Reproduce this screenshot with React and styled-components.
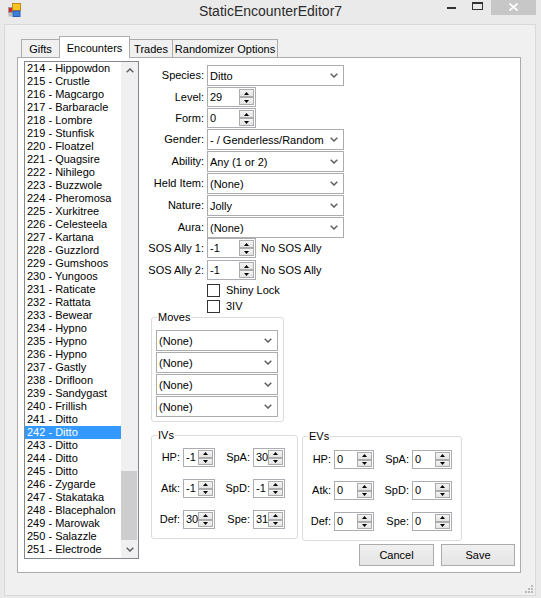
import React from "react";
import styled, { createGlobalStyle } from "styled-components";

const GlobalStyle = createGlobalStyle`
  html, body {
    margin: 0;
    padding: 0;
    background: #eaeaea;
  }
  body {
    font-family: "Liberation Sans", Arial, sans-serif;
    font-size: 11px;
    color: #000;
  }
  * {
    box-sizing: border-box;
  }
`;

const Window = styled.div`
  width: 541px;
  height: 598px;
  background: #eaeaea;
  display: flex;
  flex-direction: column;
`;

const TitleBar = styled.div`
  height: 24px;
  flex-shrink: 0;
  display: grid;
  grid-template-columns: 1fr auto 1fr;
  align-items: start;
`;

const AppIcon = styled.div`
  padding: 3px 0 0 8px;
  display: flex;
`;

const Title = styled.div`
  font-size: 14px;
  line-height: 22px;
  color: #2b2b2b;
`;

const Controls = styled.div`
  display: flex;
  justify-content: flex-end;
  margin-right: 5px;
`;

const CtlBtn = styled.div`
  width: ${(p) => p.$w}px;
  height: 15px;
  display: flex;
  justify-content: center;
  align-items: flex-start;
  padding-top: ${(p) => p.$pt}px;
  background: ${(p) => p.$bg || "transparent"};
`;

const Client = styled.div`
  margin: 0 5px 2px 4px;
  flex: 1;
  background: #f0f0f0;
  border: 1px solid #d9d9d9;
  padding: 11px 0 0 12px;
  display: flex;
  flex-direction: column;
`;

const TabStrip = styled.div`
  height: 21px;
  display: flex;
  align-items: flex-end;
  padding-left: 5px;
`;

const Tab = styled.div`
  width: ${(p) => p.$w}px;
  height: ${(p) => (p.$active ? 22 : 18)}px;
  margin-left: -1px;
  margin-bottom: ${(p) => (p.$active ? -1 : 0)}px;
  border: 1px solid #acacac;
  border-bottom: none;
  background: ${(p) => (p.$active ? "#fff" : "#f0f0f0")};
  position: relative;
  z-index: ${(p) => (p.$active ? 1 : 0)};
  display: flex;
  align-items: center;
  justify-content: center;
  white-space: nowrap;
`;

const TabPage = styled.div`
  width: 504px;
  height: 516px;
  border: 1px solid #acacac;
  background: #fff;
  display: flex;
  align-items: flex-start;
`;

const Footer = styled.div`
  flex: 1;
  display: flex;
  justify-content: flex-end;
  align-items: flex-end;
  padding: 0 1px 1px 0;
`;

const ListBox = styled.div`
  margin: 3px 0 0 6px;
  width: 115px;
  height: 498px;
  border: 1px solid #828790;
  display: flex;
`;

const Items = styled.div`
  flex: 1;
  overflow: hidden;
`;

const Item = styled.div`
  height: 13px;
  line-height: 13px;
  padding-left: 2px;
  white-space: nowrap;
  background: ${(p) => (p.$sel ? "#3399ff" : "transparent")};
  color: ${(p) => (p.$sel ? "#fff" : "#000")};
`;

const ScrollBar = styled.div`
  width: 17px;
  background: #f0f0f0;
  display: flex;
  flex-direction: column;
`;

const ScrollArrow = styled.div`
  height: 17px;
  display: flex;
  align-items: center;
  justify-content: center;
`;

const Track = styled.div`
  flex: 1;
  display: flex;
  flex-direction: column;
`;

const Thumb = styled.div`
  margin: 392px 1px 0 0;
  height: 69px;
  background: #cdcdcd;
`;

const Panel = styled.div`
  flex: 1;
  padding: 7px 5px 0 3px;
  display: flex;
  flex-direction: column;
`;

const FieldRow = styled.div`
  height: ${(p) => p.$h}px;
  display: grid;
  grid-template-columns: 62px auto;
  column-gap: 3px;
  align-items: start;
`;

const FieldLabel = styled.div`
  text-align: right;
  white-space: nowrap;
  line-height: ${(p) => p.$lh}px;
`;

const Control = styled.div`
  display: flex;
  align-items: center;
  gap: 5px;
`;

const Combo = styled.div`
  width: ${(p) => p.$w}px;
  height: 21px;
  border: 1px solid #acacac;
  background: #fff;
  display: flex;
  align-items: center;
  justify-content: space-between;
  padding: 0 5px 0 2px;
  white-space: nowrap;
`;

const NumBox = styled.div`
  width: ${(p) => p.$w}px;
  height: ${(p) => p.$h}px;
  border: 1px solid #abadb3;
  background: #fff;
  display: flex;
  padding: 1px;
`;

const NumValue = styled.div`
  flex: 1;
  padding-left: 1px;
  line-height: ${(p) => p.$h - 4}px;
`;

const SpinCol = styled.div`
  width: 15px;
  display: flex;
  flex-direction: column;
`;

const SpinBtn = styled.div`
  flex: 1;
  border: 1px solid #acacac;
  background: linear-gradient(#f4f4f4, #e4e4e4);
  display: flex;
  align-items: center;
  justify-content: center;
`;

const CheckWrap = styled.div`
  display: flex;
  align-items: center;
  gap: 6px;
  line-height: 13px;
`;

const CheckBox = styled.div`
  width: 13px;
  height: 13px;
  border: 1px solid #333;
  background: #fff;
`;

const GroupBox = styled.div`
  width: ${(p) => p.$w}px;
  height: ${(p) => p.$h}px;
  border: 1px solid #dcdcdc;
  border-radius: 3px;
  margin: ${(p) => p.$m};
  flex-shrink: 0;
`;

const Legend = styled.div`
  margin: -7px 0 0 ${(p) => p.$ml}px;
  padding: 0 1px;
  background: #fff;
  width: fit-content;
  height: 13px;
  line-height: 13px;
`;

const MoveList = styled.div`
  margin: 6px 0 0 4px;
  display: flex;
  flex-direction: column;
  gap: 1px;
`;

const GroupRow = styled.div`
  margin: 13px 0 0 9px;
  display: flex;
  align-items: flex-start;
`;

const StatGrid = styled.div`
  margin-top: ${(p) => p.$mt}px;
  display: grid;
  grid-template-columns: 31px ${(p) => p.$iw}px 38px ${(p) => p.$iw}px;
  row-gap: 12px;
`;

const StatLabel = styled.div`
  text-align: right;
  padding-right: 3px;
  line-height: 19px;
`;

const ButtonRow = styled.div`
  margin-top: 3px;
  display: flex;
  justify-content: flex-end;
  gap: 7px;
`;

const Button = styled.div`
  width: ${(p) => p.$w}px;
  height: 22px;
  border: 1px solid #acacac;
  background: linear-gradient(#f0f0f0, #e5e5e5);
  display: flex;
  align-items: center;
  justify-content: center;
`;

const Chevron = ({ up }) => (
  <svg width="8" height="5" viewBox="0 0 8 5">
    <path
      d={up ? "M0.7 4.3 L4 1 L7.3 4.3" : "M0.7 0.7 L4 4 L7.3 0.7"}
      stroke="#606060"
      strokeWidth="1.5"
      fill="none"
    />
  </svg>
);

const Tri = ({ up }) => (
  <svg width="5" height="3" viewBox="0 0 5 3">
    <path d={up ? "M0 3 L2.5 0 L5 3 Z" : "M0 0 L2.5 3 L5 0 Z"} fill="#000" />
  </svg>
);

function Spinner({ value, w, h = 20 }) {
  return (
    <NumBox $w={w} $h={h}>
      <NumValue $h={h}>{value}</NumValue>
      <SpinCol>
        <SpinBtn>
          <Tri up />
        </SpinBtn>
        <SpinBtn>
          <Tri />
        </SpinBtn>
      </SpinCol>
    </NumBox>
  );
}

function Select({ value, w }) {
  return (
    <Combo $w={w}>
      <span>{value}</span>
      <Chevron />
    </Combo>
  );
}

const names = [
  "Hippowdon", "Crustle", "Magcargo", "Barbaracle", "Lombre", "Stunfisk",
  "Floatzel", "Quagsire", "Nihilego", "Buzzwole", "Pheromosa", "Xurkitree",
  "Celesteela", "Kartana", "Guzzlord", "Gumshoos", "Yungoos", "Raticate",
  "Rattata", "Bewear", "Hypno", "Hypno", "Hypno", "Gastly", "Drifloon",
  "Sandygast", "Frillish", "Ditto", "Ditto", "Ditto", "Ditto", "Ditto",
  "Zygarde", "Stakataka", "Blacephalon", "Marowak", "Salazzle", "Electrode",
];

const fields = [
  { label: "Species:", h: 22, combo: "Ditto" },
  { label: "Level:", h: 21, num: "29" },
  { label: "Form:", h: 21, num: "0" },
  { label: "Gender:", h: 22, combo: "- / Genderless/Random" },
  { label: "Ability:", h: 22, combo: "Any (1 or 2)" },
  { label: "Held Item:", h: 22, combo: "(None)" },
  { label: "Nature:", h: 22, combo: "Jolly" },
  { label: "Aura:", h: 21, combo: "(None)" },
  { label: "SOS Ally 1:", h: 22, num: "-1", note: "No SOS Ally" },
  { label: "SOS Ally 2:", h: 24, num: "-1", note: "No SOS Ally" },
];

const ivs = [
  ["HP:", "-1", "SpA:", "30"],
  ["Atk:", "-1", "SpD:", "-1"],
  ["Def:", "30", "Spe:", "31"],
];

const evs = [
  ["HP:", "0", "SpA:", "0"],
  ["Atk:", "0", "SpD:", "0"],
  ["Def:", "0", "Spe:", "0"],
];

function StatGroup({ title, rows, w, h, m, iw, mt }) {
  return (
    <GroupBox $w={w} $h={h} $m={m}>
      <Legend $ml={5}>{title}</Legend>
      <StatGrid $mt={mt} $iw={iw}>
        {rows.map((r) => (
          <React.Fragment key={r[0]}>
            <StatLabel>{r[0]}</StatLabel>
            <Spinner value={r[1]} w={iw} h={19} />
            <StatLabel>{r[2]}</StatLabel>
            <Spinner value={r[3]} w={iw} h={19} />
          </React.Fragment>
        ))}
      </StatGrid>
    </GroupBox>
  );
}

export default function App() {
  return (
    <Window>
      <GlobalStyle />
      <TitleBar>
        <AppIcon>
          <svg width="14" height="14" viewBox="0 0 14 14">
            <rect x="0.5" y="4.5" width="4" height="5" fill="#d8262b" stroke="#9a9a9a" />
            <rect x="0.5" y="10" width="4" height="3.5" fill="#bdbdbd" />
            <rect x="4.5" y="0.5" width="8" height="7" fill="#f7c325" stroke="#c28a12" />
            <rect x="5" y="8" width="7" height="5.5" fill="#3d7fdc" stroke="#2a5eb0" />
          </svg>
        </AppIcon>
        <Title>StaticEncounterEditor7</Title>
        <Controls>
          <CtlBtn $w={26} $pt={7}>
            <svg width="9" height="2">
              <rect width="9" height="2" fill="#333" />
            </svg>
          </CtlBtn>
          <CtlBtn $w={27} $pt={2}>
            <svg width="11" height="8" viewBox="0 0 11 8">
              <rect x="0.5" y="1" width="10" height="6.5" fill="none" stroke="#333" />
              <rect x="0" y="0" width="11" height="2" fill="#333" />
            </svg>
          </CtlBtn>
          <CtlBtn $w={45} $pt={3} $bg="#c7c7c7">
            <svg width="9" height="8" viewBox="0 0 9 8">
              <path d="M0.5 0.5 L8.5 7.5 M8.5 0.5 L0.5 7.5" stroke="#fff" strokeWidth="1.6" />
            </svg>
          </CtlBtn>
        </Controls>
      </TitleBar>

      <Client>
        <TabStrip>
          <Tab $w={39}>Gifts</Tab>
          <Tab $w={71} $active>
            Encounters
          </Tab>
          <Tab $w={44}>Trades</Tab>
          <Tab $w={106}>Randomizer Options</Tab>
        </TabStrip>

        <TabPage>
          <ListBox>
            <Items>
              {names.map((n, i) => (
                <Item key={i} $sel={214 + i === 242}>
                  {214 + i} - {n}
                </Item>
              ))}
            </Items>
            <ScrollBar>
              <ScrollArrow>
                <Chevron up />
              </ScrollArrow>
              <Track>
                <Thumb />
              </Track>
              <ScrollArrow>
                <Chevron />
              </ScrollArrow>
            </ScrollBar>
          </ListBox>

          <Panel>
            {fields.map((f) => (
              <FieldRow key={f.label} $h={f.h}>
                <FieldLabel $lh={f.combo ? 21 : 20}>{f.label}</FieldLabel>
                <Control>
                  {f.combo ? (
                    <Select value={f.combo} w={137} />
                  ) : (
                    <Spinner value={f.num} w={49} />
                  )}
                  {f.note && <span>{f.note}</span>}
                </Control>
              </FieldRow>
            ))}
            <FieldRow $h={16}>
              <span />
              <CheckWrap>
                <CheckBox />
                Shiny Lock
              </CheckWrap>
            </FieldRow>
            <FieldRow $h={15}>
              <span />
              <CheckWrap>
                <CheckBox />
                3IV
              </CheckWrap>
            </FieldRow>

            <GroupBox $w={133} $h={105} $m="2px 0 0 9px">
              <Legend $ml={5}>Moves</Legend>
              <MoveList>
                {[0, 1, 2, 3].map((i) => (
                  <Select key={i} value="(None)" w={122} />
                ))}
              </MoveList>
            </GroupBox>

            <GroupRow>
              <StatGroup title="IVs" rows={ivs} w={147} h={104} m="0" iw={32} mt={6} />
              <StatGroup title="EVs" rows={evs} w={160} h={105} m="1px 0 0 4px" iw={40} mt={7} />
            </GroupRow>

            <ButtonRow>
              <Button $w={75}>Cancel</Button>
              <Button $w={74}>Save</Button>
            </ButtonRow>
          </Panel>
        </TabPage>

        <Footer>
          <svg width="10" height="10" viewBox="0 0 10 10">
            <rect x="7" y="1" width="2" height="2" fill="#b8b8b8" />
            <rect x="4" y="4" width="2" height="2" fill="#b8b8b8" />
            <rect x="7" y="4" width="2" height="2" fill="#b8b8b8" />
            <rect x="1" y="7" width="2" height="2" fill="#b8b8b8" />
            <rect x="4" y="7" width="2" height="2" fill="#b8b8b8" />
            <rect x="7" y="7" width="2" height="2" fill="#b8b8b8" />
          </svg>
        </Footer>
      </Client>
    </Window>
  );
}
